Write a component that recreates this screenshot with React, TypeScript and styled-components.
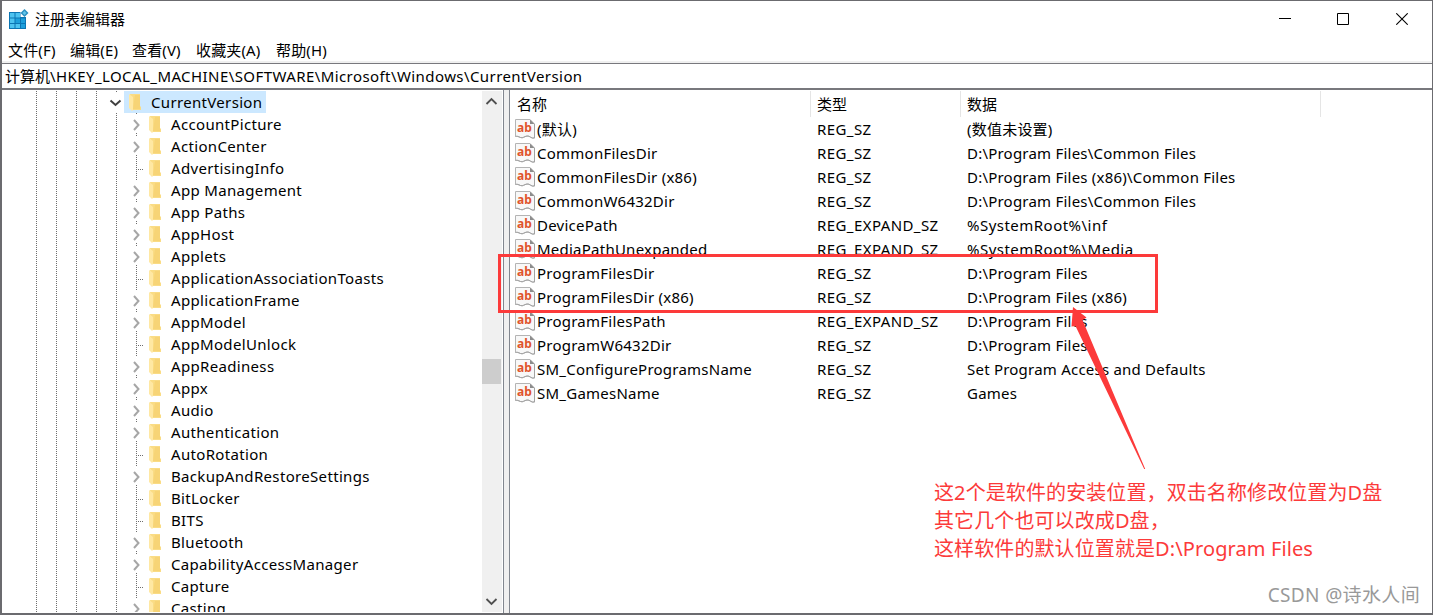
import React from 'react';
import styled, { createGlobalStyle, css } from 'styled-components';

const Global = createGlobalStyle`
  * { box-sizing: border-box; }
  body { margin: 0; overflow: hidden; background: #fff; }
`;

const Window = styled.div`
  position: relative;
  width: 1433px;
  height: 615px;
  display: flex;
  flex-direction: column;
  overflow: hidden;
  background: #fff;
  border: solid #6b6b6f;
  border-width: 1px 1px 2px 2px;
  font: 15px/22px 'Noto Sans', 'Noto Sans CJK SC', sans-serif;
  color: #000;
  white-space: nowrap;
`;

const TitleBar = styled.header`
  height: 36px;
  flex: none;
  display: flex;
  align-items: center;
  padding-left: 7px;
  svg { flex: none; display: block; }
`;
const Title = styled.h1`
  flex: 1;
  margin: 0 0 0 6px;
  font: inherit;
`;
const CaptionButtons = styled.div`
  display: flex;
  gap: 46px;
  margin-right: 24px;
  svg:last-child { margin-left: 1px; }
`;

const MenuBar = styled.nav`
  height: 24px;
  flex: none;
  display: flex;
  align-items: center;
  padding: 2px 0 0 6px;
`;
const MenuItem = styled.span<{ $w: number }>`
  width: ${p => p.$w}px;
  letter-spacing: 0.15px;
`;

const AddressBar = styled.div`
  height: 29px;
  flex: none;
  border-top: 2px solid #f0f0f0;
  display: flex;
`;
const AddressField = styled.div`
  flex: 1;
  border: solid #78787d;
  border-width: 1px 0 2px;
  padding: 1px 0 0 3px;
  line-height: 23px;
`;
const Path = styled.span`
  letter-spacing: 0.42px;
`;

const Body = styled.main`
  flex: 1;
  min-height: 0;
  display: flex;
`;
const TreePane = styled.section`
  width: 502px;
  display: flex;
  border-right: 1px solid #828790;
`;
const Tree = styled.div`
  width: 480px;
  height: 522px;
  overflow: hidden;
  padding-top: 1px;
`;
const TreeRow = styled.div`
  height: 22px;
  display: flex;
  align-items: center;
  svg { flex: none; display: block; }
`;
const TreeLabel = styled.span<{ $selected?: boolean }>`
  height: 22px;
  display: flex;
  align-items: center;
  padding: 0 4px 0 5px;
  ${p => p.$selected && css`background: #cce8ff;`}
`;
const KeyName = styled.span`
  margin-left: 10px;
  letter-spacing: 0.33px;
`;

const ScrollBar = styled.div`
  width: 20px;
  margin: 1px 0;
  background: #f0f0f0;
  display: flex;
  flex-direction: column;
  svg { display: block; }
`;
const Thumb = styled.div`
  width: 19px;
  height: 25px;
  margin: 248px 0 auto;
  background: #cdcdcd;
`;

const Splitter = styled.div`
  width: 6px;
  background: #f0f0f0;
  border-right: 1px solid #828790;
`;

const ListPane = styled.section`
  flex: 1;
`;
const columns = css`
  display: grid;
  grid-template-columns: 301px 150px 360px 1fr;
`;
const ListHeader = styled.div`
  ${columns}
  height: 27px;
  padding-top: 1px;
`;
const HeaderCell = styled.div`
  border-right: 1px solid #e5e5e5;
  padding: 2px 0 0 6px;
  &:first-child { padding-left: 7px; }
  &:last-child { border: 0; }
`;
const ListRow = styled.div`
  ${columns}
  height: 24px;
  line-height: 24px;
`;
const Cell = styled.div<{ $track?: number }>`
  padding-left: 6px;
  letter-spacing: ${p => p.$track ?? 0.22}px;
`;
const NameCell = styled.div`
  display: flex;
  padding-left: 5px;
  letter-spacing: 0.24px;
  svg { flex: none; margin: 2px 2px 0 0; display: block; letter-spacing: 0; }
`;

const Highlight = styled.div`
  position: absolute;
  left: 496px;
  top: 253px;
  width: 660px;
  height: 59px;
  border: 3px solid #fc3a3a;
`;
const Arrow = styled.svg`
  position: absolute;
  left: 1068px;
  top: 304px;
`;
const Note = styled.p`
  position: absolute;
  left: 932px;
  top: 478px;
  margin: 0;
  font-size: 20px;
  line-height: 28px;
  letter-spacing: 0.1px;
  color: #fc3a3a;
`;
const Watermark = styled.span`
  position: absolute;
  right: 12px;
  top: 580px;
  font-size: 19px;
  line-height: 28px;
  letter-spacing: 0.35px;
  color: #999;
`;

const AppIcon = () => (
  <svg width="20" height="20" viewBox="0 0 20 20">
    <path d="M0 3h11.500v5H17v12H0z" fill="#0b75b3" />
    <path d="M1 4h4.500v4.500H1zM6.500 4H11v4.500H6.500zM1 9.500h4.500V14H1zM1 15h4.500v4H1zM6.500 15H11v4H6.500z" fill="#4cc3f0" />
    <path d="M6.500 9.500H11V14H6.500zM12 9.500h4V14h-4zM12 15h4v4h-4z" fill="#1d9fdb" />
    <path d="m15.500 0 4 4-4 4-4-4z" fill="#2b8fc0" />
    <path d="m15.500 2 2 2-2 2-2-2z" fill="#63c5ea" />
  </svg>
);

const Folder = () => (
  <svg width="12" height="17" viewBox="0 0 12 17">
    <path d="M1 0h10v12l1 1v3H3z" fill="#fadc85" />
    <path d="M6 1h5v14H4z" fill="#f5d06f" opacity=".7" />
    <path d="M0 0l4 3v13l-1 1-3-3z" fill="#ffe8a3" />
  </svg>
);

const Branch = ({ kind }: { kind: 'root' | 'closed' | 'leaf' }) => (
  <svg width={kind === 'root' ? 122 : 142} height="22" shapeRendering="crispEdges">
    <g stroke="#6e6e6e" strokeDasharray="1 1">
      {[34, 54, 74, 94].map(x => <path key={x} d={`M${x}.500 0v22`} />)}
      {kind === 'root' ? <path d="M114.500 0v1" /> : <path d="M114.500 0v22" />}
      {kind === 'leaf' && <path d="M134.500 0v22M136 12.500h8" />}
      {kind === 'closed' && <path d="M134.500 0v2M134.500 20v2" />}
    </g>
    {kind === 'root' && (
      <path d="M108.500 9.500l5 4.500 5-4.500" fill="none" stroke="#404040" strokeWidth="2" shapeRendering="auto" />
    )}
    {kind === 'closed' && (
      <path d="M132 7l4.500 5-4.500 5" fill="none" stroke="#a6a6a6" strokeWidth="2" shapeRendering="auto" />
    )}
  </svg>
);

const ValueIcon = () => (
  <svg width="20" height="20" viewBox="0 0 20 20">
    <path d="M.500.500H15L19.500 5v14c-3.500 1-4.500-2.500-7.500-2s-4 2.500-6.500 1.500-3-1.500-5-1z" fill="#f8f8f8" stroke="#b4b4b4" />
    <path d="M15 .500 19.500 5H15z" fill="#8c8c8c" />
    <path d="M.500 17.500c2-.5 2.500 0 5 1s3.500-1 6.500-1.500 4 3 7.500 2V5" fill="none" stroke="#a2a2a2" />
    <text x="2" y="12.500" fontSize="12" fontWeight="700" fontFamily="Noto Sans, sans-serif" fill="#e0542c">ab</text>
  </svg>
);

const keys: [string, boolean][] = [
  ['AccountPicture', true], ['ActionCenter', true], ['AdvertisingInfo', false],
  ['App Management', true], ['App Paths', true], ['AppHost', true], ['Applets', true],
  ['ApplicationAssociationToasts', false], ['ApplicationFrame', true], ['AppModel', true],
  ['AppModelUnlock', false], ['AppReadiness', true], ['Appx', true], ['Audio', true],
  ['Authentication', true], ['AutoRotation', false], ['BackupAndRestoreSettings', true],
  ['BitLocker', false], ['BITS', false], ['Bluetooth', true],
  ['CapabilityAccessManager', true], ['Capture', false], ['Casting', true],
];

const values = [
  ['(默认)', 'REG_SZ', '(数值未设置)'],
  ['CommonFilesDir', 'REG_SZ', 'D:\\Program Files\\Common Files'],
  ['CommonFilesDir (x86)', 'REG_SZ', 'D:\\Program Files (x86)\\Common Files'],
  ['CommonW6432Dir', 'REG_SZ', 'D:\\Program Files\\Common Files'],
  ['DevicePath', 'REG_EXPAND_SZ', '%SystemRoot%\\inf'],
  ['MediaPathUnexpanded', 'REG_EXPAND_SZ', '%SystemRoot%\\Media'],
  ['ProgramFilesDir', 'REG_SZ', 'D:\\Program Files'],
  ['ProgramFilesDir (x86)', 'REG_SZ', 'D:\\Program Files (x86)'],
  ['ProgramFilesPath', 'REG_EXPAND_SZ', 'D:\\Program Files'],
  ['ProgramW6432Dir', 'REG_SZ', 'D:\\Program Files'],
  ['SM_ConfigureProgramsName', 'REG_SZ', 'Set Program Access and Defaults'],
  ['SM_GamesName', 'REG_SZ', 'Games'],
];

export default function App() {
  return (
    <>
      <Global />
      <Window>
        <TitleBar>
          <AppIcon />
          <Title>注册表编辑器</Title>
          <CaptionButtons>
            <svg width="12" height="12"><path d="M0 5.500h12" stroke="#000" /></svg>
            <svg width="12" height="12"><path d="M.500.500h11v11H.500z" fill="none" stroke="#000" /></svg>
            <svg width="12" height="12"><path d="M.300.300l11.400 11.400M11.700.300L.300 11.700" stroke="#000" strokeWidth="1.100" /></svg>
          </CaptionButtons>
        </TitleBar>
        <MenuBar>
          <MenuItem $w={62}>文件(F)</MenuItem>
          <MenuItem $w={62}>编辑(E)</MenuItem>
          <MenuItem $w={64}>查看(V)</MenuItem>
          <MenuItem $w={80}>收藏夹(A)</MenuItem>
          <MenuItem $w={62}>帮助(H)</MenuItem>
        </MenuBar>
        <AddressBar>
          <AddressField>计算机<Path>\HKEY_LOCAL_MACHINE\SOFTWARE\Microsoft\Windows\CurrentVersion</Path></AddressField>
        </AddressBar>
        <Body>
          <TreePane>
            <Tree>
              <TreeRow>
                <Branch kind="root" />
                <TreeLabel $selected><Folder /><KeyName>CurrentVersion</KeyName></TreeLabel>
              </TreeRow>
              {keys.map(([name, expandable]) => (
                <TreeRow key={name}>
                  <Branch kind={expandable ? 'closed' : 'leaf'} />
                  <TreeLabel><Folder /><KeyName>{name}</KeyName></TreeLabel>
                </TreeRow>
              ))}
            </Tree>
            <ScrollBar>
              <svg width="20" height="20"><path d="M4.500 13l5-5 5 5" fill="none" stroke="#505050" strokeWidth="1.800" /></svg>
              <Thumb />
              <svg width="20" height="20"><path d="M4.500 7l5 5 5-5" fill="none" stroke="#505050" strokeWidth="1.800" /></svg>
            </ScrollBar>
          </TreePane>
          <Splitter />
          <ListPane>
            <ListHeader>
              <HeaderCell>名称</HeaderCell>
              <HeaderCell>类型</HeaderCell>
              <HeaderCell>数据</HeaderCell>
              <HeaderCell />
            </ListHeader>
            {values.map(([name, type, data]) => (
              <ListRow key={name}>
                <NameCell><ValueIcon />{name}</NameCell>
                <Cell $track={0.42}>{type}</Cell>
                <Cell $track={data.startsWith('%') ? 0.48 : undefined}>{data}</Cell>
              </ListRow>
            ))}
          </ListPane>
        </Body>
        <Highlight />
        <Arrow width="80" height="166" viewBox="1070 305 80 166">
          <path d="M1073 307l13.500 10.500-4 2.500L1145.200 469h-1L1075.500 326l-4 .5z" fill="#fc3a3a" />
        </Arrow>
        <Note>
          这2个是软件的安装位置，双击名称修改位置为D盘<br />
          其它几个也可以改成D盘，<br />
          这样软件的默认位置就是D:\Program Files
        </Note>
        <Watermark>CSDN @诗水人间</Watermark>
      </Window>
    </>
  );
}
